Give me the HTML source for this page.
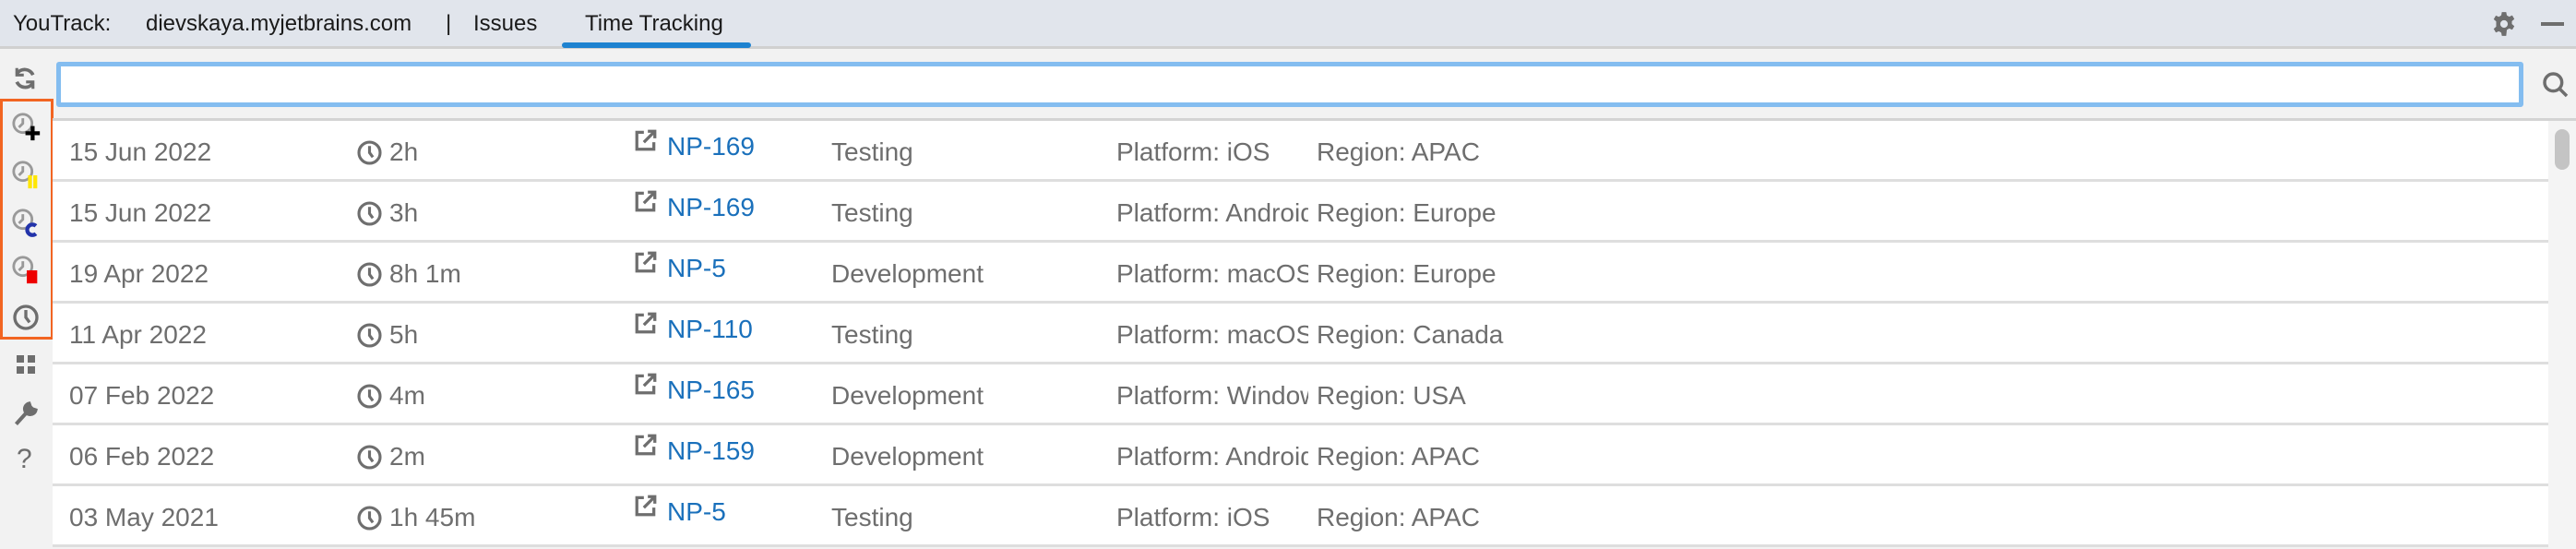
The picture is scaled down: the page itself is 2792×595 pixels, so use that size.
<!DOCTYPE html>
<html><head><meta charset="utf-8"><style>
*{margin:0;padding:0;box-sizing:border-box}
body{width:2792px;height:592px;overflow:hidden;background:#f2f2f2;font-family:"Liberation Sans",sans-serif;position:relative}
.hdr{position:absolute;left:0;top:0;width:2792px;height:53px;background:#e1e5ec;border-bottom:3px solid #d0d0d0}
.hdr span{position:absolute;top:12px;font-size:24px;color:#1a1a1a}
.ul{position:absolute;left:609px;top:46px;width:205px;height:6px;border-radius:3px;background:#1e82d0}
.search{position:absolute;left:61px;top:67px;width:2674px;height:49px;background:#fff;border:5px solid #84bdf0;border-radius:3px}
.list{position:absolute;left:57px;top:128px;width:2735px;height:464px;background:#fff;border-top:3px solid #d4d4d4}
.track{position:absolute;right:0;top:0;width:30px;height:464px;background:#f4f4f4}
.thumb{position:absolute;left:7px;top:9px;width:16px;height:44px;background:#c4c4c4;border-radius:8px}
.row{position:absolute;left:0;width:2705px;height:66px;border-bottom:3px solid #dedede;font-size:28px;color:#6e6e6e}
.row div{position:absolute;top:18px;white-space:nowrap}
.c1{left:18px}.c2{left:329px}.c3{left:630px;color:#1a70bb}.c4{left:844px}.c5{left:1153px;width:208px;overflow:hidden}.c6{left:1370px;width:259px;overflow:hidden}
.c2 svg,.c3 svg{position:absolute;top:2px}
.side{position:absolute;left:0;top:53px;width:57px;height:539px}
.side svg{position:absolute;left:12px}
.orange{position:absolute;left:0;top:107px;width:58px;height:261px;border:3px solid #f26522}
</style></head><body>
<div class="hdr">
<span style="left:14px">YouTrack:</span>
<span style="left:158px">dievskaya.myjetbrains.com</span>
<span style="left:483px">|</span>
<span style="left:513px">Issues</span>
<span style="left:634px">Time Tracking</span>
<div class="ul"></div>
<svg style="position:absolute;left:2700px;top:12px" width="28" height="28" viewBox="0 0 24 24"><path fill="#6e6e6e" d="M10 1h4l.6 3 2.2 1.2 2.8-1.2 2 3.4-2.3 2v2.6l2.3 2-2 3.4-2.8-1.2-2.2 1.3L14 23h-4l-.6-3-2.2-1.3-2.8 1.2-2-3.4 2.3-2V9.6l-2.3-2 2-3.4 2.8 1.2L9.4 4z"/><circle cx="12" cy="12" r="3.5" fill="#e1e5ec"/></svg>
<div style="position:absolute;left:2754px;top:24px;width:25px;height:4px;background:#6e6e6e"></div>
</div>
<div class="side">
<svg style="top:17px" width="30" height="30" viewBox="0 0 24 24" fill="none" stroke="#6e6e6e" stroke-width="3"><path d="M19 9A8 8 0 0 0 5 8M5 15a8 8 0 0 0 14 1"/><path d="M5 3v6h6M19 21v-6h-6" stroke-width="2.5"/></svg>
<svg style="top:68px" width="34" height="34" viewBox="0 0 24 24"><circle cx="9" cy="9" r="7" fill="none" stroke="#999" stroke-width="2"/><path d="M9 5v4l-3 3" stroke="#999" stroke-width="2" fill="none"/><path d="M15 11h3v4h4v3h-4v4h-3v-4h-4v-3h4z" fill="#000"/></svg>
<svg style="top:120px" width="34" height="34" viewBox="0 0 24 24"><circle cx="9" cy="9" r="7" fill="none" stroke="#999" stroke-width="2"/><path d="M9 5v4l-3 3" stroke="#999" stroke-width="2" fill="none"/><rect x="13" y="12" width="3" height="10" fill="#ffe600"/><rect x="17" y="12" width="3" height="10" fill="#ffe600"/></svg>
<svg style="top:172px" width="34" height="34" viewBox="0 0 24 24"><circle cx="9" cy="9" r="7" fill="none" stroke="#999" stroke-width="2"/><path d="M9 5v4l-3 3" stroke="#999" stroke-width="2" fill="none"/><path d="M19 14a4 4 0 1 0 0 6" stroke="#2233aa" stroke-width="3" fill="none"/></svg>
<svg style="top:223px" width="34" height="34" viewBox="0 0 24 24"><circle cx="9" cy="9" r="7" fill="none" stroke="#999" stroke-width="2"/><path d="M9 5v4l-3 3" stroke="#999" stroke-width="2" fill="none"/><rect x="12" y="12" width="8" height="10" fill="#e00"/></svg>
<svg style="top:275px" width="32" height="32" viewBox="0 0 24 24"><circle cx="12" cy="12" r="9" fill="none" stroke="#6e6e6e" stroke-width="2.5"/><path d="M12 6v6l3 4" stroke="#6e6e6e" stroke-width="2.5" fill="none"/></svg>
<svg style="top:330px;left:16px" width="24" height="24" viewBox="0 0 24 24" fill="#6e6e6e"><rect x="2" y="2" width="8" height="8"/><rect x="14" y="2" width="8" height="8"/><rect x="2" y="14" width="8" height="8"/><rect x="14" y="14" width="8" height="8"/></svg>
<svg style="top:380px;left:14px" width="28" height="30" viewBox="0 0 24 24"><path d="M3 22l9-10M15 3a5 5 0 1 0 6 6l-3-1-2-2z" stroke="#6e6e6e" stroke-width="3.5" fill="#6e6e6e"/></svg>
<div style="position:absolute;left:18px;top:428px;font-size:30px;color:#6e6e6e">?</div>
</div>
<div class="orange"></div>
<div class="search"></div>
<svg style="position:absolute;left:2754px;top:76px" width="32" height="32" viewBox="0 0 24 24" fill="none" stroke="#6e6e6e" stroke-width="2.6"><circle cx="10" cy="10" r="7"/><path d="M15 15l6 6"/></svg>
<div class="list">
<div class="track"><div class="thumb"></div></div>
__ROWS__
</div>
<script>
const d=[["15 Jun 2022","2h","NP-169","Testing","Platform: iOS","Region: APAC"],["15 Jun 2022","3h","NP-169","Testing","Platform: Android","Region: Europe"],["19 Apr 2022","8h 1m","NP-5","Development","Platform: macOS","Region: Europe"],["11 Apr 2022","5h","NP-110","Testing","Platform: macOS","Region: Canada"],["07 Feb 2022","4m","NP-165","Development","Platform: Windows","Region: USA"],["06 Feb 2022","2m","NP-159","Development","Platform: Android","Region: APAC"],["03 May 2021","1h 45m","NP-5","Testing","Platform: iOS","Region: APAC"]];
const clk='<svg style="left:0" width="29" height="29" viewBox="0 0 24 24"><circle cx="12" cy="12" r="9.5" fill="none" stroke="#6e6e6e" stroke-width="2.6"/><path d="M12 6v6l3 4" stroke="#6e6e6e" stroke-width="2.6" fill="none"/></svg>';
const lnk='<svg style="left:0;top:-4px" width="26" height="26" viewBox="0 0 24 24" fill="none" stroke="#6e6e6e" stroke-width="3"><path d="M10 4H3v17h17v-7"/><path d="M10 14L21 3M14 3h7v7"/></svg>';
let h='';d.forEach((r,i)=>{h+=`<div class="row" style="top:${i*66}px"><div class="c1">${r[0]}</div><div class="c2">${clk}<span style="margin-left:36px">${r[1]}</span></div><div class="c3" style="top:12px">${lnk}<span style="margin-left:36px">${r[2]}</span></div><div class="c4">${r[3]}</div><div class="c5">${r[4]}</div><div class="c6">${r[5]}</div></div>`});
document.querySelector('.list').innerHTML=document.querySelector('.list').innerHTML.replace('__ROWS__',h);
</script>
</body></html>
